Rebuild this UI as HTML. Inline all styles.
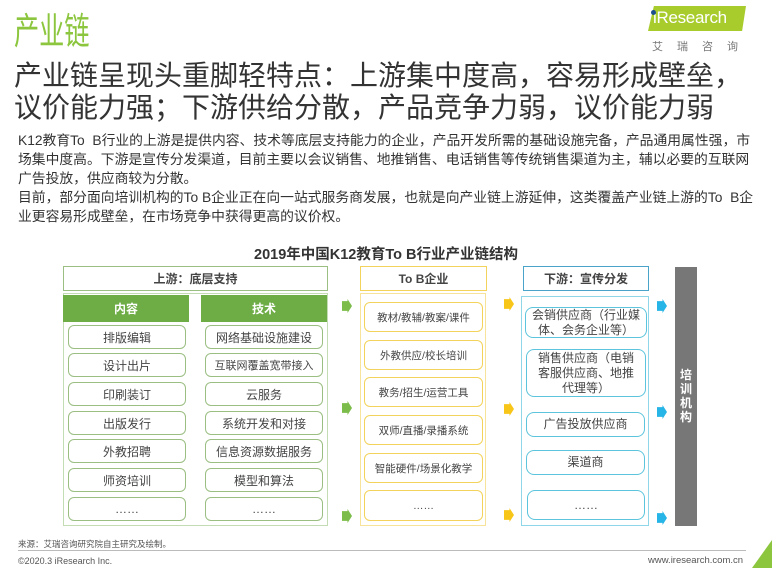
<!DOCTYPE html>
<html><head><meta charset="utf-8"><style>
*{margin:0;padding:0;box-sizing:border-box}
body{width:772px;height:568px;position:relative;background:#fff;font-family:"Liberation Sans","Noto Sans CJK SC",sans-serif;color:#333;overflow:hidden}
.a{position:absolute}
.c{display:flex;align-items:center;justify-content:center;text-align:center}
.gi{border:1px solid #9bbf83;border-radius:6px;font-size:12px;color:#444;background:#fff}
.yi{border:1px solid #f3d35b;border-radius:6px;font-size:10.5px;color:#444;background:#fff}
.bi{border:1px solid #5cc4dc;border-radius:8px;font-size:12px;color:#444;background:#fff;line-height:15px}
.arr{position:absolute;width:10px;height:14px;clip-path:polygon(0 15%,55% 15%,55% 0,100% 50%,55% 100%,55% 85%,0 85%)}
</style></head><body>
<div class="a" style="left:14px;top:1px;font-size:37px;color:#8cc63e;transform:scaleX(0.68);transform-origin:0 0;white-space:nowrap">产业链</div>
<div class="a" style="left:648px;top:6px;width:98px;height:25px;background:#a8cc2c;clip-path:polygon(6% 0,100% 0,96% 100%,0 100%)"></div>
<div class="a" style="left:653px;top:8px;font-size:17px;color:#fff;letter-spacing:-0.3px">iResearch</div>
<div class="a" style="left:651px;top:10px;width:5px;height:5px;border-radius:50%;background:#1e4e8c"></div>
<div class="a" style="left:652px;top:38px;font-size:11px;color:#777;letter-spacing:14px">艾瑞咨询</div>
<div class="a" style="left:14px;top:60px;font-size:28px;line-height:32px;color:#333;white-space:nowrap">产业链呈现头重脚轻特点：上游集中度高，容易形成壁垒，<br>议价能力强；下游供给分散，产品竞争力弱，议价能力弱</div>
<div class="a" style="left:18px;top:131px;font-size:13.8px;line-height:19px;color:#333;white-space:nowrap">K12教育To&nbsp; B行业的上游是提供内容、技术等底层支持能力的企业，产品开发所需的基础设施完备，产品通用属性强，市<br>场集中度高。下游是宣传分发渠道，目前主要以会议销售、地推销售、电话销售等传统销售渠道为主，辅以必要的互联网<br>广告投放，供应商较为分散。<br>目前，部分面向培训机构的To B企业正在向一站式服务商发展，也就是向产业链上游延伸，这类覆盖产业链上游的To&nbsp; B企<br>业更容易形成壁垒，在市场竞争中获得更高的议价权。</div>
<div class="a" style="left:0;width:772px;top:243px;text-align:center;font-size:14.5px;font-weight:bold;color:#333">2019年中国K12教育To B行业产业链结构</div>

<div class="a c" style="left:63px;top:266px;width:265px;height:25px;border:1.5px solid #9bbf83;font-size:12px;font-weight:bold;color:#444">上游：底层支持</div>
<div class="a" style="left:63px;top:293px;width:265px;height:233px;border:1px solid #c4dcb3"></div>
<div class="a c" style="left:63px;top:295px;width:126px;height:27px;background:#6eac46;color:#fff;font-size:12px;font-weight:bold">内容</div>
<div class="a c" style="left:201px;top:295px;width:126px;height:27px;background:#6eac46;color:#fff;font-size:12px;font-weight:bold">技术</div>
<div class="a c gi" style="left:68px;top:325px;width:118px;height:24px">排版编辑</div>
<div class="a c gi" style="left:68px;top:353px;width:118px;height:24px">设计出片</div>
<div class="a c gi" style="left:68px;top:382px;width:118px;height:24px">印刷装订</div>
<div class="a c gi" style="left:68px;top:411px;width:118px;height:24px">出版发行</div>
<div class="a c gi" style="left:68px;top:439px;width:118px;height:24px">外教招聘</div>
<div class="a c gi" style="left:68px;top:468px;width:118px;height:24px">师资培训</div>
<div class="a c gi" style="left:68px;top:497px;width:118px;height:24px">……</div>
<div class="a c gi" style="left:205px;top:325px;width:118px;height:24px">网络基础设施建设</div>
<div class="a c gi" style="left:205px;top:353px;width:118px;height:24px;font-size:11px">互联网覆盖宽带接入</div>
<div class="a c gi" style="left:205px;top:382px;width:118px;height:24px">云服务</div>
<div class="a c gi" style="left:205px;top:411px;width:118px;height:24px">系统开发和对接</div>
<div class="a c gi" style="left:205px;top:439px;width:118px;height:24px">信息资源数据服务</div>
<div class="a c gi" style="left:205px;top:468px;width:118px;height:24px">模型和算法</div>
<div class="a c gi" style="left:205px;top:497px;width:118px;height:24px">……</div>

<div class="arr" style="left:342px;top:299px;background:#7cbc4a"></div>
<div class="arr" style="left:342px;top:401px;background:#7cbc4a"></div>
<div class="arr" style="left:342px;top:509px;background:#7cbc4a"></div>

<div class="a c" style="left:360px;top:266px;width:127px;height:25px;border:1.5px solid #f3d35b;font-size:12px;font-weight:bold;color:#444">To B企业</div>
<div class="a" style="left:360px;top:293px;width:126px;height:233px;border:1px solid #f7e39a"></div>
<div class="a c yi" style="left:364px;top:302px;width:119px;height:30px">教材/教辅/教案/课件</div>
<div class="a c yi" style="left:364px;top:340px;width:119px;height:30px">外教供应/校长培训</div>
<div class="a c yi" style="left:364px;top:377px;width:119px;height:30px">教务/招生/运营工具</div>
<div class="a c yi" style="left:364px;top:415px;width:119px;height:30px">双师/直播/录播系统</div>
<div class="a c yi" style="left:364px;top:453px;width:119px;height:30px">智能硬件/场景化教学</div>
<div class="a c yi" style="left:364px;top:490px;width:119px;height:31px">……</div>

<div class="arr" style="left:504px;top:297px;background:#f7c619"></div>
<div class="arr" style="left:504px;top:402px;background:#f7c619"></div>
<div class="arr" style="left:504px;top:508px;background:#f7c619"></div>

<div class="a c" style="left:523px;top:266px;width:126px;height:25px;border:1.5px solid #4aa3c8;font-size:12px;font-weight:bold;color:#444">下游：宣传分发</div>
<div class="a" style="left:521px;top:296px;width:128px;height:230px;border:1px solid #8ed6e8"></div>
<div class="a c bi" style="left:525px;top:307px;width:122px;height:31px">会销供应商（行业媒体、会务企业等）</div>
<div class="a c bi" style="left:526px;top:349px;width:120px;height:48px;padding:0 8px">销售供应商（电销客服供应商、地推代理等）</div>
<div class="a c bi" style="left:526px;top:412px;width:119px;height:25px">广告投放供应商</div>
<div class="a c bi" style="left:526px;top:450px;width:119px;height:25px">渠道商</div>
<div class="a c bi" style="left:527px;top:490px;width:118px;height:30px">……</div>

<div class="arr" style="left:657px;top:299px;background:#27b4e6"></div>
<div class="arr" style="left:657px;top:405px;background:#27b4e6"></div>
<div class="arr" style="left:657px;top:511px;background:#27b4e6"></div>

<div class="a" style="left:675px;top:267px;width:22px;height:259px;background:#777"></div>
<div class="a" style="left:675px;top:368px;width:22px;color:#fff;font-size:12px;font-weight:bold;line-height:14px;text-align:center">培<br>训<br>机<br>构</div>

<div class="a" style="left:18px;top:538px;font-size:8.5px;color:#555">来源：艾瑞咨询研究院自主研究及绘制。</div>
<div class="a" style="left:18px;top:550px;width:728px;height:1px;background:#bbb"></div>
<div class="a" style="left:18px;top:556px;font-size:9px;color:#555">©2020.3 iResearch Inc.</div>
<div class="a" style="left:648px;top:555px;font-size:9.5px;color:#555">www.iresearch.com.cn</div>
<div class="a" style="left:752px;top:540px;width:20px;height:28px;background:#8cc63e;clip-path:polygon(100% 0,100% 100%,0 100%)"></div>
</body></html>
